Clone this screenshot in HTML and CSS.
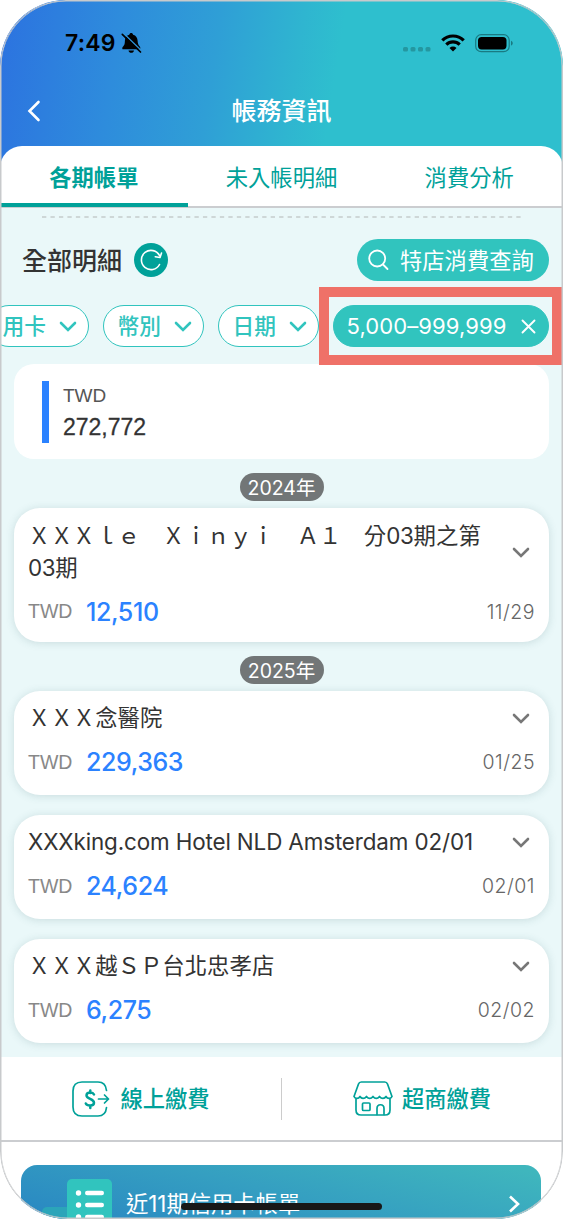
FILE: index.html
```html
<!DOCTYPE html>
<html lang="zh-Hant">
<head>
<meta charset="utf-8">
<title>帳務資訊</title>
<link rel="stylesheet" href="styles.css">
</head>
<body>
<svg class="defs" width="0" height="0">
  <symbol id="down" viewBox="0 0 18 11"><path d="M2 2l7 7 7-7" fill="none" stroke="currentColor" stroke-width="2.6" stroke-linecap="round" stroke-linejoin="miter"/></symbol>
</svg>
<div class="phone">
  <header class="header">
    <div class="status">
      <span class="time">7:49</span>
      <svg class="bell" width="21" height="22" viewBox="0 0 21 22"><path d="M8.300 2.700C8.500 1.500 9.300 1 10.200 1S11.900 1.500 12.100 2.700C15 3.500 16.500 5.800 16.600 8.800 16.700 12 17.500 13 18.800 14.500 19.500 15.500 19.500 16.300 19 17.200H1.500C1 16 1.300 15.300 2.300 14.300 3.500 13 3.800 12 3.900 8.800 4 5.500 5.500 3.500 8.300 2.700ZM7.500 18.400H13C12.700 21.600 7.900 21.600 7.500 18.400Z"/><path d="M2.500 1.200 20.500 18.700" fill="none" stroke="#2e94d9" stroke-width="1.300"/><path d="M1.300 2.300 19.500 20" fill="none" stroke="#000" stroke-width="1.700" stroke-linecap="round"/></svg>
      <span class="space"></span>
      <svg class="dots" width="28" height="6" viewBox="0 0 28 6"><g fill="#2497a0"><rect x="0" y="1" width="5" height="4.400" rx="1.500"/><rect x="7.500" y="1" width="5" height="4.400" rx="1.500"/><rect x="15" y="1" width="5" height="4.400" rx="1.500"/><rect x="22.500" y="1" width="5" height="4.400" rx="1.500"/></g></svg>
      <svg class="wifi" width="24" height="18" viewBox="0 0 24 18"><g fill="none" stroke="#000" stroke-width="3.200"><path d="M1.300 6.400C7.200.500 16.800.500 22.700 6.400"/><path d="M5.300 10.600C9 7 15 7 18.700 10.600"/></g><path d="M8.500 13.900C10.500 12.100 13.500 12.100 15.500 13.900L12 17.500Z"/></svg>
      <svg class="battery" width="39" height="19" viewBox="0 0 39 19"><rect x=".7" y=".7" width="33.500" height="17" rx="5.500" fill="none" stroke="#197a82" stroke-width="1.200"/><rect x="3" y="2.900" width="28.500" height="12.600" rx="3.700"/><path d="M36 6.800c2.300.8 2.300 4 0 4.800z" fill="#197a82"/></svg>
    </div>
    <div class="titlebar">
      <svg width="14" height="22" viewBox="0 0 14 22"><path d="M11.500 2 2.500 11l9 9" fill="none" stroke="#fff" stroke-width="2.600" stroke-linecap="round"/></svg>
      <h1>帳務資訊</h1>
    </div>
  </header>
  <nav class="tabs">
    <span class="tab active">各期帳單</span><span class="tab">未入帳明細</span><span class="tab">消費分析</span>
  </nav>
  <main class="content">
    <svg class="dash" width="479" height="2"><path d="M0 1H479" stroke="#c5cbcc" stroke-width="1.400" stroke-dasharray="4.300 4.170"/></svg>
    <div class="heading">
      <h2>全部明細</h2>
      <svg class="refresh" width="34" height="34" viewBox="0 0 34 34"><circle cx="17" cy="17" r="17" fill="#00a199"/><g fill="none" stroke="#fff" stroke-width="1.600" stroke-linecap="round" stroke-linejoin="round"><path d="M25.500 21.500A9.600 9.600 0 1 1 25.600 12.700"/><path d="M21.300 13.700 26 14.500 27.500 10.100"/></g></svg>
      <span class="space"></span>
      <div class="search"><svg width="21" height="22" viewBox="0 0 21 22"><g fill="none" stroke="#fff" stroke-width="1.800" stroke-linecap="round"><circle cx="9.200" cy="9.500" r="8"/><path d="M15 15.500 19.500 20"/></g></svg><span>特店消費查詢</span></div>
    </div>
    <div class="filters">
      <div class="chip cut"><span>用卡</span><svg width="18" height="11"><use href="#down"/></svg></div>
      <div class="chip"><span>幣別</span><svg width="18" height="11"><use href="#down"/></svg></div>
      <div class="chip"><span>日期</span><svg width="18" height="11"><use href="#down"/></svg></div>
      <div class="chip range"><span>5,000–999,999</span><svg width="15" height="15" viewBox="0 0 15 15"><path d="M1.500 1.500l12 12m0-12-12 12" fill="none" stroke="#fff" stroke-width="1.900" stroke-linecap="round"/></svg><i class="frame"></i></div>
    </div>
    <section class="summary"><i class="bar"></i><div><div class="currency">TWD</div><div class="total">272,772</div></div></section>
    <div class="year">2024年</div>
    <article class="card first">
      <div class="top"><p>ＸＸＸｌｅ　Ｘｉｎｙｉ　Ａ１　分<span class="num">03</span>期之第<br><span class="num">03</span>期</p><svg width="18" height="11"><use href="#down"/></svg></div>
      <div class="bottom"><span class="cur">TWD</span><span class="amount">12,510</span><span class="date">11/29</span></div>
    </article>
    <div class="year">2025年</div>
    <article class="card">
      <div class="top"><p>ＸＸＸ念醫院</p><svg width="18" height="11"><use href="#down"/></svg></div>
      <div class="bottom"><span class="cur">TWD</span><span class="amount">229,363</span><span class="date">01/25</span></div>
    </article>
    <article class="card">
      <div class="top"><p class="latin">XXXking.com Hotel NLD Amsterdam 02/01</p><svg width="18" height="11"><use href="#down"/></svg></div>
      <div class="bottom"><span class="cur">TWD</span><span class="amount">24,624</span><span class="date">02/01</span></div>
    </article>
    <article class="card">
      <div class="top"><p>ＸＸＸ越ＳＰ台北忠孝店</p><svg width="18" height="11"><use href="#down"/></svg></div>
      <div class="bottom"><span class="cur">TWD</span><span class="amount">6,275</span><span class="date">02/02</span></div>
    </article>
  </main>
  <div class="actions">
    <div class="action"><svg width="38" height="36" viewBox="0 0 38 36"><g fill="none" stroke="#00a199" stroke-width="1.700" stroke-linecap="round" stroke-linejoin="round"><path d="M34.500 9.500C34 4 31 1 26 1H10Q1 1 1 10V26Q1 35 10 35H26C31 35 34 32 34.500 26.500"/><path d="M26.500 18H36.500M32.500 14l4 4-4 4"/><path d="M22 13.500C20.500 10.500 14.500 11 14.500 14.500S22 18 22 21.700 15 25 13.800 22.500M18.300 9.500V12M18.300 24.500V27" stroke-width="2.500"/></g></svg><span>線上繳費</span></div>
    <i class="divider"></i>
    <div class="action store"><svg width="40" height="35" viewBox="0 0 40 35"><g fill="none" stroke="#00a199" stroke-width="1.700" stroke-linecap="round" stroke-linejoin="round"><path d="M1 15.500 5.500 3Q6.200 1 8.300 1H31.700Q33.800 1 34.500 3L39 15.500C38 18 34.500 18.200 33 15.500 31.500 18 28.500 18 26.500 15.500 24.500 18 22 18 20 15.500 18 18 15.500 18 13.500 15.500 11.500 18 8.500 18 7 15.500 5.500 18.200 2 18 1 15.500ZM3 18V29Q3 34 8 34H32Q37 34 37 29V18"/><rect x="9.500" y="22" width="7.500" height="7.500" rx="1"/><path d="M24 33.500V27.500C24 22.500 31 22.500 31 27.500V33.500"/></g></svg><span>超商繳費</span></div>
  </div>
  <footer class="footer">
    <div class="banner">
      <svg class="lists" width="72" height="40" viewBox="0 0 72 40"><rect x="0" y="28" width="35" height="14" rx="5" fill="#2ba5b9"/><rect x="25" y="0" width="45" height="46" rx="5" fill="#31c4be"/><g fill="#fff"><circle cx="36.500" cy="14" r="2.700"/><rect x="43" y="11.800" width="19" height="4.400" rx="2.200"/><circle cx="36.500" cy="26" r="2.700"/><rect x="43" y="23.800" width="19" height="4.400" rx="2.200"/><circle cx="36.500" cy="38" r="2.700"/><rect x="43" y="35.800" width="19" height="4.400" rx="2.200"/></g></svg>
      <span>近11期信用卡帳單</span>
      <svg class="go" width="13" height="18" viewBox="0 0 13 18"><path d="M2 1.500l8 7.500-8 7.500" fill="none" stroke="#fff" stroke-width="2.600"/></svg>
    </div>
  </footer>
  <i class="home"></i>
  <i class="edge"></i>
</div>
</body>
</html>
```
FILE: styles.css
```css
* { box-sizing: border-box; }
body { margin: 0; background: #fff; font-family: Inter, "Noto Sans CJK TC", sans-serif; color: #333; }
h1, h2, p { margin: 0; font-weight: 400; }
i { display: block; }
svg { display: block; flex: none; }
.defs { position: absolute; }
.phone { position: relative; width: 563px; height: 1219px; overflow: hidden; border-radius: 66px 66px 68px 68px; background: #fff; }
.edge { position: absolute; inset: 0; border: 1.500px solid #c8cacc; border-radius: inherit; box-shadow: inset 0 0 0 .5px #c8cacc; }
.header { height: 166px; background: linear-gradient(99deg, #2c72e0 0%, #2e8cdc 21%, #2f9fd6 38%, #2fb5d0 52%, #2ebfce 59%, #2ebfce 100%); }
.status { display: flex; align-items: center; height: 86px; padding: 0 49px 0 65px; }
.time { width: 53px; font-size: 23px; font-weight: 600; color: #000; letter-spacing: .2px; }
.bell { margin-left: 3px; }
.space { flex: 1; }
.dots { margin-top: 12px; }
.wifi { margin-left: 10px; }
.battery { margin-left: 10px; }
.titlebar { position: relative; display: flex; align-items: center; height: 50px; padding-left: 27px; }
.titlebar h1 { position: absolute; left: 0; right: 0; text-align: center; font-size: 25px; font-weight: 500; line-height: 52px; color: #fff; }
.tabs { display: flex; position: relative; height: 62px; margin-top: -20px; border-radius: 22px 22px 0 0; background: #fff; border-bottom: 2px solid #cbcdd0; }
.tab { display: flex; flex: 1; align-items: center; justify-content: center; height: 61px; font-size: 22.300px; color: #00a199; padding-bottom: 1px; }
.tab.active { font-weight: 700; border-bottom: 4px solid #00a199; padding: 3px 0 0; }
.content { height: 849px; padding: 8px 14px 0; background: #eaf8f9; }
.dash { margin-left: 28px; }
.heading { display: flex; align-items: center; height: 42px; margin-top: 21px; padding-left: 8px; }
.heading h2 { padding-top: 1px; font-size: 25px; line-height: 42px; font-weight: 500; }
.refresh { margin-left: 12px; }
.search { display: flex; align-items: center; gap: 11px; width: 192px; height: 42px; padding-left: 11px; border-radius: 21px; background: #31c4be; color: #fff; font-size: 22.300px; line-height: 42px; white-space: nowrap; }
.search span { padding-top: 1px; }
.filters { display: flex; justify-content: flex-end; gap: 14px; height: 42px; margin-top: 24px; }
.chip { display: flex; flex: none; align-items: center; justify-content: space-between; width: 101px; padding: 0 11px 0 14px; height: 42px; border: 1.500px solid #31c4be; border-radius: 21px; background: #fff; color: #31c4be; font-size: 21.700px; font-weight: 500; white-space: nowrap; line-height: 40px; }
.chip.range { position: relative; width: 216.500px; padding: 0 12px 0 13px; background: #31c4be; color: #fff; font-size: 22px; font-weight: 400; letter-spacing: .1px; }
.frame { position: absolute; left: -14.500px; top: -19px; width: 243px; height: 78px; border: 10px solid #ef7168; }
.summary { display: flex; height: 95px; margin-top: 17px; padding: 17px 0 0 28px; gap: 14px; border-radius: 20px; background: #fff; }
.bar { width: 7px; height: 62px; background: #2b82ff; }
.currency { font-size: 19px; line-height: 30px; color: #555; font-family: "Liberation Sans", sans-serif; }
.total { font-size: 23px; line-height: 33px; font-family: "Liberation Sans", sans-serif; -webkit-text-stroke: .3px; }
.year { display: flex; align-items: center; justify-content: center; width: 84px; height: 28px; margin: 14px auto 7px; border-radius: 14px; background: #727677; color: #fff; font-size: 19.500px; line-height: 28px; padding-top: 1px; }
.card { display: flex; flex-direction: column; margin-bottom: 20.200px; padding: 11px 14px 16px; border-radius: 26px; background: #fff; box-shadow: 0 1px 9px rgba(50, 100, 105, .18); }
.card.first { margin-bottom: 0; padding: 12px 14px 14px; }
.top { display: flex; align-items: center; justify-content: space-between; padding-right: 5px; color: #777; }
.top p { color: #333; font-size: 22.400px; line-height: 32px; white-space: nowrap; }
.bottom { display: flex; align-items: center; height: 34px; margin-top: 11px; color: #888; }
.first .bottom { height: 33px; }
.cur { width: 58px; font-size: 19.500px; font-family: "Liberation Sans", sans-serif; }
.amount { color: #2b82ff; font-size: 25px; font-weight: 500; letter-spacing: -.4px; }
.date { margin-left: auto; font-size: 19.500px; font-weight: 300; color: #666; letter-spacing: .5px; }
.num { letter-spacing: -.3px; }
.latin { letter-spacing: -.12px; }
.actions { display: flex; align-items: center; height: 85px; border-bottom: 2px solid #cbcdd0; background: #fff; }
.action { display: flex; flex: 1; align-items: center; justify-content: center; gap: 10px; color: #00a199; font-size: 22.300px; font-weight: 500; padding-left: 1px; }
.action span { line-height: 32px; padding-top: 1px; }
.store { gap: 9px; padding: 0 1px 0 0; }
.divider { width: 1px; height: 42px; background: #ccc; }
.footer { padding: 23px 22px 0 21px; }
.banner { display: flex; align-items: flex-start; height: 56px; padding: 14px 20px 0 21px; border-radius: 16px 16px 0 0; background: linear-gradient(14deg, #2b8bc2 10%, #359fc1 50%, #3fb6bd 95%); color: #fff; font-size: 22.300px; }
.banner span { margin: 8px 0 0 12px; line-height: 34px; white-space: nowrap; }
.go { margin: 16px 0 0 auto; }
.home { position: absolute; left: 181px; top: 1203px; width: 201px; height: 7px; border-radius: 4px; background: #181818; }
```
